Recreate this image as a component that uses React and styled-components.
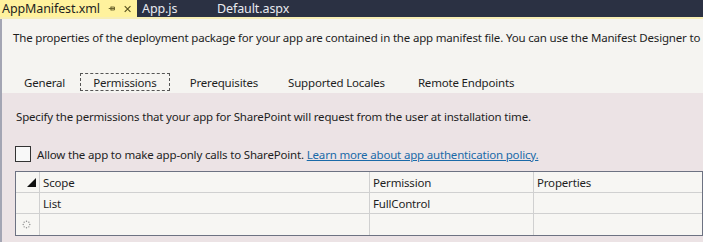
import React from 'react';
import styled, { createGlobalStyle } from 'styled-components';

const GlobalStyle = createGlobalStyle`
  html, body {
    margin: 0;
    padding: 0;
    overflow: hidden;
    background: #f5f4f1;
  }
`;

const Frame = styled.div`
  width: 703px;
  height: 242px;
  display: flex;
  flex-direction: column;
  font-family: 'Noto Sans', 'Open Sans', sans-serif;
  font-size: 11.5px;
  letter-spacing: -0.18px;
  color: #1e1e1e;
  overflow: hidden;
`;

const DocTabs = styled.div`
  height: 17px;
  display: flex;
  align-items: stretch;
  background: #2b3143;
  border-bottom: 2px solid #f7eeb6;
`;

const DocTab = styled.div`
  display: flex;
  align-items: center;
  gap: 8px;
  padding: 0 ${(p) => (p.$active ? '6px' : '0')} 0 ${(p) => p.$indent}px;
  width: ${(p) => p.$width}px;
  background: ${(p) => (p.$active ? '#fff29d' : 'transparent')};
  color: ${(p) => (p.$active ? '#1e1e1e' : '#e8eaf0')};
  font-size: 12.5px;
  letter-spacing: -0.1px;
  white-space: nowrap;
  box-sizing: border-box;
`;

const TabName = styled.span`
  margin-right: auto;
`;

const Body = styled.div`
  flex: 1;
  display: flex;
  flex-direction: column;
  border-left: 2px solid #a3a5b3;
  background: #f5f4f1;
`;

const Intro = styled.div`
  padding: 11px 0 0 11px;
  height: 16px;
  line-height: 16px;
  white-space: nowrap;
`;

const PageTabs = styled.div`
  display: flex;
  align-items: center;
  height: 18px;
  margin-top: 27px;
  padding-left: 19px;
`;

const PageTab = styled.div`
  height: 18px;
  display: flex;
  align-items: center;
  padding: 0 ${(p) => p.$pad}px;
  border: 1px ${(p) => (p.$active ? 'dashed #555' : 'solid transparent')};
  box-sizing: border-box;
  margin-right: ${(p) => p.$gap}px;
  white-space: nowrap;
`;

const Panel = styled.div`
  flex: 1;
  margin-top: 2px;
  background: #ece3e5;
  padding: 15px 0 0 13px;
  display: flex;
  flex-direction: column;
`;

const Note = styled.div`
  height: 18px;
  line-height: 18px;
  padding-left: 1px;
  white-space: nowrap;
`;

const CheckRow = styled.label`
  display: flex;
  align-items: center;
  gap: 6px;
  height: 16px;
  margin-top: 20px;
  white-space: nowrap;
`;

const Box = styled.span`
  width: 16px;
  height: 16px;
  border: 1px solid #333;
  background: #f8f8f8;
  box-sizing: border-box;
`;

const Link = styled.a`
  color: #1a6aa8;
  text-decoration: underline;
`;

const Grid = styled.div`
  margin-top: 9px;
  width: 686px;
  border: 1px solid #6d7282;
  background: #f7f6f3;
  display: grid;
  grid-template-columns: 24px 330px 164px 1fr;
  grid-auto-rows: 21px;
`;

const Cell = styled.div`
  display: flex;
  align-items: center;
  padding-left: 3px;
  border-right: 1px solid #d0d0d0;
  border-bottom: 1px solid #d0d0d0;
  white-space: nowrap;
  &:nth-child(4n) {
    border-right: none;
  }
  &:nth-last-child(-n + 4) {
    border-bottom: none;
  }
`;

const RowHead = styled(Cell)`
  justify-content: ${(p) => (p.$end ? 'flex-end' : 'flex-start')};
  padding-left: 6px;
  padding-right: 3px;
`;

function PinIcon() {
  return (
    <svg width="11" height="11" viewBox="0 0 11 11">
      <path d="M1 5.5h3M4 3v5M4 3.5h5v4H4M4 5.5h5" stroke="#5a5320" strokeWidth="1.2" fill="none" />
    </svg>
  );
}

function CloseIcon() {
  return (
    <svg width="10" height="10" viewBox="0 0 10 10">
      <path d="M1 1l8 8M9 1l-8 8" stroke="#5a5320" strokeWidth="1.6" />
    </svg>
  );
}

function SortGlyph() {
  return (
    <svg width="9" height="9" viewBox="0 0 9 9">
      <path d="M9 0v9H0z" fill="#111" />
    </svg>
  );
}

function NewRowGlyph() {
  const dots = [0, 45, 90, 135, 180, 225, 270, 315];
  return (
    <svg width="9" height="9" viewBox="-4.5 -4.5 9 9">
      {dots.map((a) => (
        <circle
          key={a}
          cx={3.3 * Math.cos((a * Math.PI) / 180)}
          cy={3.3 * Math.sin((a * Math.PI) / 180)}
          r="0.7"
          fill="#8a8a8a"
        />
      ))}
    </svg>
  );
}

const pageTabs = [
  { name: 'General', pad: 2, gap: 12 },
  { name: 'Permissions', pad: 12, gap: 15 },
  { name: 'Prerequisites', pad: 4, gap: 20 },
  { name: 'Supported Locales', pad: 4, gap: 23 },
  { name: 'Remote Endpoints', pad: 4, gap: 0 },
];

export default function App() {
  return (
    <>
      <GlobalStyle />
      <Frame>
        <DocTabs>
          <DocTab $active $width={137} $indent={2}>
            <TabName>AppManifest.xml</TabName>
            <PinIcon />
            <CloseIcon />
          </DocTab>
          <DocTab $width={80} $indent={5}>App.js</DocTab>
          <DocTab $width={100} $indent={0}>Default.aspx</DocTab>
        </DocTabs>
        <Body>
          <Intro>
            The properties of the deployment package for your app are contained in the app manifest file. You can use the Manifest Designer to
          </Intro>
          <PageTabs>
            {pageTabs.map((t, i) => (
              <PageTab key={t.name} $active={i === 1} $pad={t.pad} $gap={t.gap}>
                {t.name}
              </PageTab>
            ))}
          </PageTabs>
          <Panel>
            <Note>Specify the permissions that your app for SharePoint will request from the user at installation time.</Note>
            <CheckRow>
              <Box />
              <span>
                Allow the app to make app-only calls to SharePoint.{' '}
                <Link href="#">Learn more about app authentication policy.</Link>
              </span>
            </CheckRow>
            <Grid>
              <RowHead $end>
                <SortGlyph />
              </RowHead>
              <Cell>Scope</Cell>
              <Cell>Permission</Cell>
              <Cell>Properties</Cell>
              <RowHead />
              <Cell>List</Cell>
              <Cell>FullControl</Cell>
              <Cell />
              <RowHead>
                <NewRowGlyph />
              </RowHead>
              <Cell />
              <Cell />
              <Cell />
            </Grid>
          </Panel>
        </Body>
      </Frame>
    </>
  );
}
